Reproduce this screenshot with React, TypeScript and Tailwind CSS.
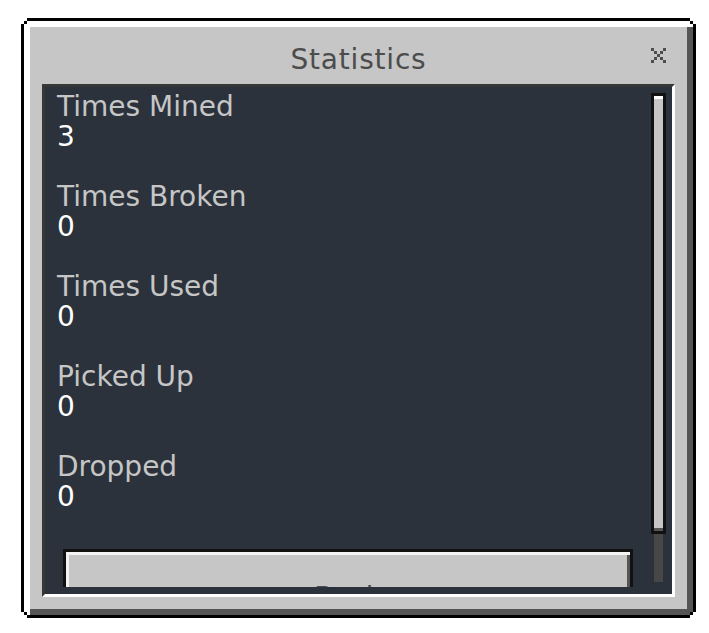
import React from "react";

const stats: [string, string][] = [
  ["Times Mined", "3"],
  ["Times Broken", "0"],
  ["Times Used", "0"],
  ["Picked Up", "0"],
  ["Dropped", "0"],
];

function PixelX() {
  const px = [
    [0, 0], [4, 0], [1, 1], [3, 1], [2, 2], [1, 3], [3, 3], [0, 4], [4, 4],
  ];
  return (
    <svg width="15" height="15" viewBox="0 0 15 15" shapeRendering="crispEdges">
      {px.map(([x, y], i) => (
        <rect key={i} x={x * 3} y={y * 3} width="3" height="3" fill="#4d4d4d" />
      ))}
    </svg>
  );
}

export default function App() {
  return (
    <div className="w-[709px] h-[633px] bg-white pl-[21px] pt-[18px] overflow-hidden [font-family:'DejaVu_Sans',sans-serif]">
      <div className="w-[675px] h-[600px] bg-black p-[3px] [clip-path:polygon(6px_0,calc(100%_-_6px)_0,calc(100%_-_6px)_3px,calc(100%_-_3px)_3px,calc(100%_-_3px)_6px,100%_6px,100%_calc(100%_-_6px),calc(100%_-_3px)_calc(100%_-_6px),calc(100%_-_3px)_calc(100%_-_3px),calc(100%_-_6px)_calc(100%_-_3px),calc(100%_-_6px)_100%,6px_100%,6px_calc(100%_-_3px),3px_calc(100%_-_3px),3px_calc(100%_-_6px),0_calc(100%_-_6px),0_6px,3px_6px,3px_3px,6px_3px)]">
        <div className="w-full h-full bg-[#c6c6c6] p-[6px] flex flex-col shadow-[inset_6px_6px_0_0_#ffffff,inset_-6px_-6px_0_0_#555555] [clip-path:polygon(3px_0,calc(100%_-_3px)_0,calc(100%_-_3px)_3px,100%_3px,100%_calc(100%_-_3px),calc(100%_-_3px)_calc(100%_-_3px),calc(100%_-_3px)_100%,3px_100%,3px_calc(100%_-_3px),0_calc(100%_-_3px),0_3px,3px_3px)]">
          <div className="relative h-[57px] shrink-0 flex justify-center pt-[18px]">
            <div className="text-[28px] leading-[30px] text-[#4c4c4c] tracking-[0.8px]">Statistics</div>
            <div className="absolute right-[21px] top-[21px] w-[15px] h-[15px]">
              <PixelX />
            </div>
          </div>
          <div className="mx-[12px] mb-[12px] flex-1 border-[3px] border-t-[#373737] border-l-[#373737] border-b-white border-r-white bg-[#2b323c] flex">
            <div className="w-[606px] h-[500px] overflow-hidden pt-[5px] shrink-0">
              <div className="px-[12px] flex flex-col gap-[30px]">
                {stats.map(([label, value]) => (
                  <div key={label} className="flex flex-col">
                    <div className="text-[28px] leading-[30px] text-[#c6c6c6]">{label}</div>
                    <div className="text-[28px] leading-[30px] text-white">{value}</div>
                  </div>
                ))}
              </div>
              <div className="mt-[37px] mx-[18px] h-[94px] border-[3px] border-[#111111] bg-[#c6c6c6] shadow-[inset_3px_3px_0_0_#f4f4f4,inset_-3px_-3px_0_0_#555555] flex justify-center pt-[31px]">
                <div className="text-[28px] leading-[30px] text-[#4c4c4c]">Back</div>
              </div>
            </div>
            <div className="relative w-[15px] h-[489px] mt-[6px] shrink-0">
              <div className="mx-[3px] h-full bg-[#474747]" />
              <div className="absolute left-0 top-0 w-full h-[441px] border-[3px] border-[#111111] bg-[#c6c6c6] shadow-[inset_0_3px_0_0_#ffffff,inset_0_-3px_0_0_#555555]" />
            </div>
          </div>
        </div>
      </div>
    </div>
  );
}
